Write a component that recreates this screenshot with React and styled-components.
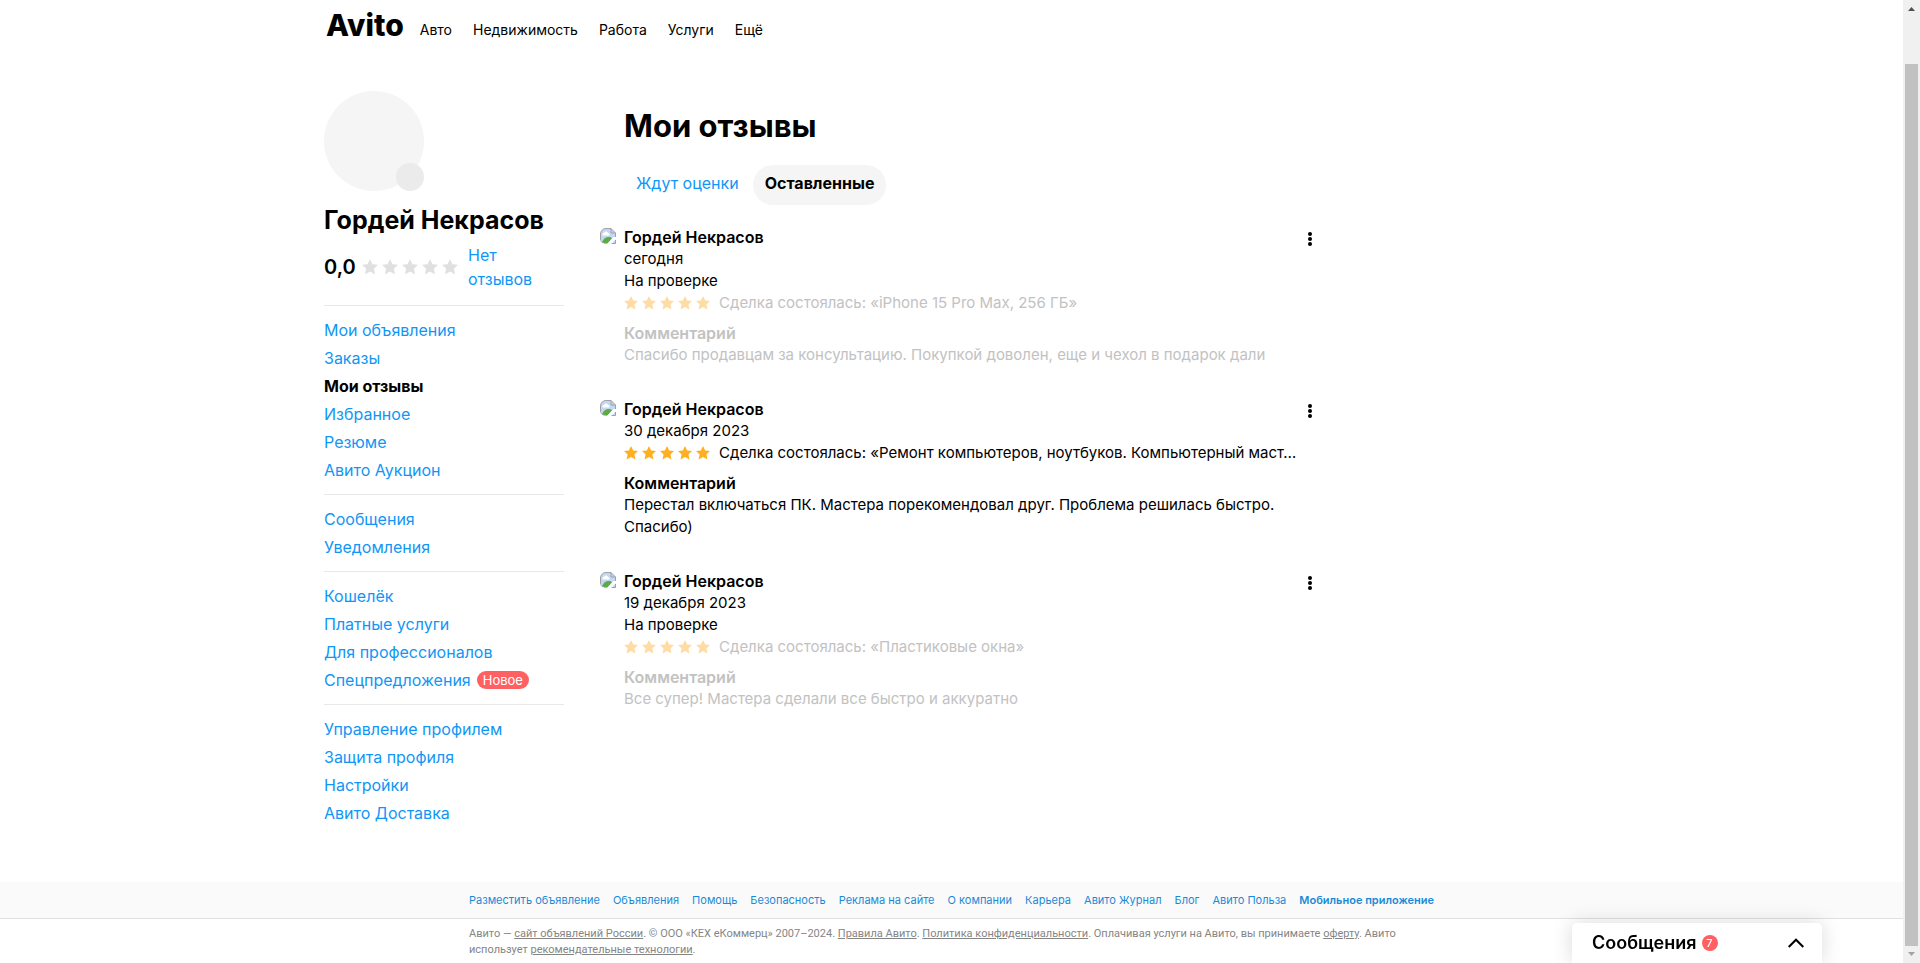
import React from 'react';
import styled, { createGlobalStyle } from 'styled-components';

const GlobalStyle = createGlobalStyle`
  * {
    box-sizing: border-box;
  }
  body {
    margin: 0;
    overflow: hidden;
    background: #fff;
    color: #000;
    font-family: Inter, "Liberation Sans", sans-serif;
    font-size: 15px;
    line-height: 22px;
  }
  ul, h1, h2, h3, p {
    margin: 0;
    padding: 0;
  }
  ul {
    list-style: none;
  }
  a {
    color: #0f96f6;
    text-decoration: none;
  }
  button {
    padding: 0;
    border: 0;
    background: none;
    color: inherit;
    font: inherit;
    cursor: pointer;
  }
`;

const Shell = styled.div`
  display: flex;
  height: 100vh;
  overflow: hidden;
`;

const Page = styled.div`
  flex: 1;
  min-width: 0;
`;

const Container = styled.div`
  width: 100%;
  max-width: ${({ $narrow }) => ($narrow ? '965px' : '1255px')};
  margin: 0 auto;
`;

const Header = styled.header`
  height: 91px;
  padding-top: 7px;
`;

const HeaderRow = styled(Container)`
  display: flex;
  align-items: flex-start;
`;

const Logo = styled.a`
  margin: 0 16px 0 2px;
  color: #000;
  font-size: 30px;
  font-weight: 800;
  line-height: 36px;
`;

const Nav = styled.nav`
  display: flex;
  gap: 21px;
  padding-top: 12px;
  font-size: 14px;

  a {
    color: #000;
  }
`;

const Columns = styled(Container)`
  display: flex;
  gap: 36px;
  min-height: 791px;
`;

const Sidebar = styled.aside`
  flex: 0 0 240px;
  font-size: 16px;
`;

const Avatar = styled.div`
  display: flex;
  align-items: flex-end;
  justify-content: flex-end;
  width: 100px;
  height: 100px;
  border-radius: 50%;
  background: #f5f5f5;
`;

const AvatarEdit = styled.button`
  width: 28px;
  height: 28px;
  border-radius: 50%;
  background: #ebebeb;
`;

const UserName = styled.h2`
  padding: 13px 0 7px;
  font-size: 25px;
  font-weight: 700;
  line-height: 32px;
  white-space: nowrap;
`;

const Rating = styled.div`
  display: flex;
  align-items: center;
  margin-bottom: 14px;
  line-height: 24px;

  b {
    width: 38px;
    font-size: 20px;
    font-weight: 600;
  }
  a {
    width: 90px;
    margin-left: 10px;
  }
`;

const StarRow = styled.span`
  display: flex;
  flex-shrink: 0;
  gap: 4px;
  color: ${({ $color }) => $color};
`;

const MenuGroup = styled.ul`
  padding: 10px 0;
  border-top: 1px solid #e8e8e8;
`;

const MenuItem = styled.li`
  display: flex;
  align-items: center;
  gap: 6px;
  height: 28px;
  font-weight: ${({ $active }) => ($active ? 700 : 400)};
  white-space: nowrap;

  a {
    color: ${({ $active }) => ($active ? '#000' : '#0f96f6')};
  }
`;

const NewTag = styled.span`
  padding: 0 6px;
  border-radius: 9px;
  background: #ff6163;
  color: #fff;
  font-size: 13px;
  line-height: 18px;
`;

const Main = styled.main`
  flex: 0 1 720px;
  min-width: 0;
`;

const Title = styled.h1`
  padding: 15px 0 19px 24px;
  font-size: 31px;
  font-weight: 700;
  line-height: 40px;
`;

const Tabs = styled.div`
  display: flex;
  gap: 2px;
  padding-left: 24px;
  margin-bottom: 21px;
  font-size: 16px;
`;

const Tab = styled.button`
  height: 40px;
  padding: 0 12px 4px;
  border-radius: 20px;
  background: ${({ $active }) => ($active ? '#f5f5f5' : 'none')};
  color: ${({ $active }) => ($active ? '#000' : '#0f96f6')};
  font-weight: ${({ $active }) => ($active ? 700 : 400)};
`;

const Review = styled.article`
  display: flex;
  gap: 8px;
  margin-bottom: 32px;
`;

const ReviewBody = styled.div`
  flex: 1;
  min-width: 0;
`;

const ReviewHead = styled.div`
  display: flex;
  justify-content: space-between;

  h3 {
    font-size: 16px;
    font-weight: 600;
  }
`;

const MoreButton = styled.button`
  display: flex;
  align-items: center;
  justify-content: center;
  width: 20px;
  height: 26px;
  margin-bottom: -4px;
`;

const ReviewContent = styled.div`
  color: ${({ $pending }) => ($pending ? '#c2c2c2' : '#000')};

  h4 {
    margin: 8px 0 0;
    font-size: 16px;
    font-weight: 600;
  }
`;

const Deal = styled.div`
  display: flex;
  align-items: center;
  gap: 9px;

  p {
    overflow: hidden;
    text-overflow: ellipsis;
    white-space: nowrap;
  }
`;

const BrokenImage = styled.svg`
  flex-shrink: 0;
  width: 16px;
  height: 16px;
  margin-top: 2px;
`;

const FooterBand = styled.div`
  border-bottom: 1px solid #e0e0e0;
  background: #fafafa;
`;

const FooterLinks = styled(Container)`
  display: flex;
  justify-content: space-between;
  height: 36px;
  align-items: center;
  font-size: 11px;
  white-space: nowrap;

  a {
    color: #1a8ad8;
  }
  a:last-child {
    font-weight: 600;
  }
`;

const FooterText = styled(Container)`
  padding-top: 7px;
  color: #858585;
  font-family: Roboto, "Liberation Sans", sans-serif;
  font-size: 11px;
  line-height: 16px;

  a {
    color: inherit;
    text-decoration: underline;
  }
`;

const Messenger = styled.button`
  position: fixed;
  right: 98px;
  bottom: 0;
  display: flex;
  align-items: center;
  width: 250px;
  height: 40px;
  padding: 0 18px 0 20px;
  border-radius: 5px 5px 0 0;
  background: #fff;
  box-shadow: 0 0 20px rgba(0, 0, 0, 0.15);
  font-size: 18px;
  font-weight: 600;

  svg {
    margin-left: auto;
  }
`;

const Counter = styled.span`
  width: 16px;
  margin-left: 5px;
  border-radius: 50%;
  background: #ff6163;
  color: #fff;
  font-size: 11px;
  font-weight: 500;
  line-height: 16px;
`;

const Scrollbar = styled.div`
  display: flex;
  flex-direction: column;
  justify-content: space-between;
  align-items: center;
  width: 17px;
  height: 100vh;
  background: #f0f0f0;
`;

const Thumb = styled.div`
  flex: 1;
  width: 13px;
  margin-top: 47px;
  background: #c1c1c1;
`;

const menu = [
  ['Мои объявления', 'Заказы', 'Мои отзывы', 'Избранное', 'Резюме', 'Авито Аукцион'],
  ['Сообщения', 'Уведомления'],
  ['Кошелёк', 'Платные услуги', 'Для профессионалов', 'Спецпредложения'],
  ['Управление профилем', 'Защита профиля', 'Настройки', 'Авито Доставка'],
];

const reviews = [
  {
    date: 'сегодня',
    pending: true,
    deal: '«iPhone 15 Pro Max, 256 ГБ»',
    text: 'Спасибо продавцам за консультацию. Покупкой доволен, еще и чехол в подарок дали',
  },
  {
    date: '30 декабря 2023',
    pending: false,
    deal: '«Ремонт компьютеров, ноутбуков. Компьютерный маст…',
    text: 'Перестал включаться ПК. Мастера порекомендовал друг. Проблема решилась быстро. Спасибо)',
  },
  {
    date: '19 декабря 2023',
    pending: true,
    deal: '«Пластиковые окна»',
    text: 'Все супер! Мастера сделали все быстро и аккуратно',
  },
];

const footerLinks = [
  'Разместить объявление',
  'Объявления',
  'Помощь',
  'Безопасность',
  'Реклама на сайте',
  'О компании',
  'Карьера',
  'Авито Журнал',
  'Блог',
  'Авито Польза',
  'Мобильное приложение',
];

const Stars = ({ size, color }) => (
  <StarRow $color={color}>
    {[1, 2, 3, 4, 5].map((n) => (
      <svg key={n} width={size} height={size} viewBox="0 0 16 16" fill="currentColor">
        <path d="M8 0l2.500 5.200 5.500.6-4.100 3.900 1.200 5.800L8 12.600l-5.100 2.900 1.200-5.800L0 5.800l5.500-.6z" />
      </svg>
    ))}
  </StarRow>
);

const PhotoStub = () => (
  <BrokenImage viewBox="0 0 16 16">
    <path d="M6 .5h5l4.500 4.500v10.500H5L.5 11V6A5.500 5.500 0 0 1 6 .5z" fill="#c4d7f5" />
    <path d="M3.500 7.500C2 7.500 2 5 4 5c.5-2 3.500-2 4 0 2 0 2 2.500.5 2.500z" fill="#fff" />
    <path d="M2 14c1.500-3.500 4.500-5.500 7.500-5 1.500.3 2 .8 2.500 1.500L7.500 15.500H4.500z" fill="#5aad3f" />
    <path d="M7 16l6.500-7H16v2l-4.500 5z" fill="#fff" />
    <path
      d="M6 .5h5l4.500 4.500v4M.5 11V6A5.500 5.500 0 0 1 6 .5M11 .5V5h4.500M.5 11a5 5 0 0 0 3 4.200M11.500 15.500h4V12"
      fill="none"
      stroke="#a0a0a0"
    />
  </BrokenImage>
);

const App = () => {
  return (
    <Shell>
      <GlobalStyle />
      <Page>
        <Header>
          <HeaderRow>
            <Logo href="#">Avito</Logo>
            <Nav>
              {['Авто', 'Недвижимость', 'Работа', 'Услуги', 'Ещё'].map((item) => (
                <a key={item} href="#">{item}</a>
              ))}
            </Nav>
          </HeaderRow>
        </Header>
        <Columns>
          <Sidebar>
            <Avatar>
              <AvatarEdit aria-label="Изменить фото" />
            </Avatar>
            <UserName>Гордей Некрасов</UserName>
            <Rating>
              <b>0,0</b>
              <Stars size={16} color="#e0e0e0" />
              <a href="#">Нет отзывов</a>
            </Rating>
            {menu.map((group) => (
              <MenuGroup key={group[0]}>
                {group.map((item) => (
                  <MenuItem key={item} $active={item === 'Мои отзывы'}>
                    <a href="#">{item}</a>
                    {item === 'Спецпредложения' && <NewTag>Новое</NewTag>}
                  </MenuItem>
                ))}
              </MenuGroup>
            ))}
          </Sidebar>
          <Main>
            <Title>Мои отзывы</Title>
            <Tabs>
              <Tab>Ждут оценки</Tab>
              <Tab $active>Оставленные</Tab>
            </Tabs>
            {reviews.map((review) => (
              <Review key={review.deal}>
                <PhotoStub />
                <ReviewBody>
                  <ReviewHead>
                    <h3>Гордей Некрасов</h3>
                    <MoreButton aria-label="Действия">
                      <svg width="4" height="14" viewBox="0 0 4 14">
                        <circle cx="2" cy="2" r="2" />
                        <circle cx="2" cy="7" r="2" />
                        <circle cx="2" cy="12" r="2" />
                      </svg>
                    </MoreButton>
                  </ReviewHead>
                  <p>{review.date}</p>
                  {review.pending && <p>На проверке</p>}
                  <ReviewContent $pending={review.pending}>
                    <Deal>
                      <Stars size={14} color={review.pending ? '#ffdca3' : '#ffb021'} />
                      <p>Сделка состоялась: {review.deal}</p>
                    </Deal>
                    <h4>Комментарий</h4>
                    <p>{review.text}</p>
                  </ReviewContent>
                </ReviewBody>
              </Review>
            ))}
          </Main>
        </Columns>
        <footer>
          <FooterBand>
            <FooterLinks $narrow>
              {footerLinks.map((item) => (
                <a key={item} href="#">{item}</a>
              ))}
            </FooterLinks>
          </FooterBand>
          <FooterText $narrow>
            Авито — <a href="#">сайт объявлений России</a>. © ООО «КЕХ еКоммерц» 2007–2024.{' '}
            <a href="#">Правила Авито</a>. <a href="#">Политика конфиденциальности</a>. Оплачивая
            услуги на Авито, вы принимаете <a href="#">оферту</a>. Авито использует{' '}
            <a href="#">рекомендательные технологии</a>.
          </FooterText>
        </footer>
      </Page>
      <Messenger>
        Сообщения
        <Counter>7</Counter>
        <svg width="16" height="10" viewBox="0 0 16 10" fill="none" stroke="#000" strokeWidth="2">
          <path d="M.7 9L8 1.700 15.300 9" />
        </svg>
      </Messenger>
      <Scrollbar>
        <svg width="17" height="17" viewBox="0 0 17 17">
          <path d="M5 11l3.500-4 3.500 4z" fill="#505050" />
        </svg>
        <Thumb />
        <svg width="17" height="17" viewBox="0 0 17 17">
          <path d="M5 6l3.500 4L12 6z" fill="#a3a3a3" />
        </svg>
      </Scrollbar>
    </Shell>
  );
};

export default App;
